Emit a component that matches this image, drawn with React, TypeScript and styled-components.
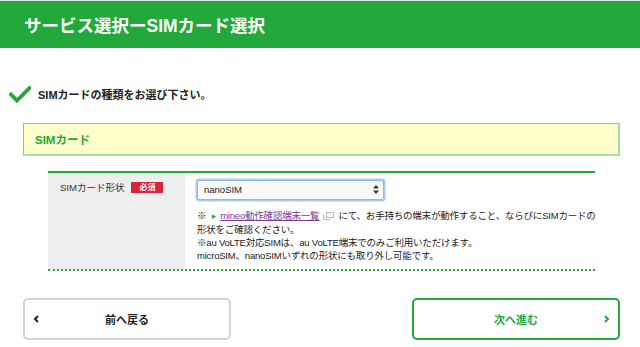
import React from 'react';
import styled, { createGlobalStyle } from 'styled-components';

const GlobalStyle = createGlobalStyle`
  html, body {
    margin: 0;
    padding: 0;
    background: #fff;
  }
  body {
    font-family: "Liberation Sans", "Noto Sans CJK JP", sans-serif;
    color: #222;
  }
`;

const Page = styled.div`
  width: 640px;
  height: 347px;
  overflow: hidden;
  border-top: 1px solid #e2e2e2;
  box-sizing: border-box;
`;

const Header = styled.header`
  height: 47px;
  background: #23a93b;
  display: flex;
  align-items: center;
  padding-left: 24px;
`;

const Title = styled.h1`
  margin: 0;
  font-size: 17.5px;
  font-weight: 700;
  color: #fff;
`;

const Lead = styled.div`
  display: flex;
  align-items: center;
  gap: 7px;
  margin: 37px 0 0 9px;
  height: 18px;
`;

const LeadText = styled.p`
  margin: 0;
  font-size: 11px;
  font-weight: 700;
  color: #222;
`;

const SectionBar = styled.div`
  margin: 20px 20px 0 23px;
  height: 30px;
  border: 1px solid #82cc86;
  border-right-width: 2px;
  border-bottom-width: 2px;
  border-bottom-color: #a7dba6;
  border-right-color: #a7dba6;
  background: #ffffcc;
  display: flex;
  align-items: center;
  padding-left: 11px;
  font-size: 11.5px;
  font-weight: 700;
  color: #23a93b;
`;

const Table = styled.div`
  margin: 15px 45px 0 48px;
  border-top: 2px solid #23a93b;
  border-bottom: 2px dotted #23a93b;
  display: grid;
  grid-template-columns: 137px 1fr;
  height: 96px;
`;

const LabelCell = styled.div`
  background: #eeeeee;
  display: flex;
  align-items: flex-start;
  gap: 7px;
  padding: 9px 0 0 12px;
  font-size: 9.5px;
  line-height: 12px;
  color: #333;
`;

const Required = styled.span`
  display: inline-block;
  background: #d9233b;
  color: #fff;
  font-size: 8px;
  font-weight: 700;
  padding: 0 8px;
  line-height: 11px;
`;

const ValueCell = styled.div`
  padding: 6px 0 0 12px;
`;

const SelectWrap = styled.div`
  position: relative;
  width: 187px;
  height: 20px;
`;

const Select = styled.select`
  appearance: none;
  width: 100%;
  height: 100%;
  box-sizing: border-box;
  border: 1px solid #8fb7ea;
  box-shadow: 0 0 0 1.5px #a9cdf5;
  border-radius: 2px;
  background: #fafafa;
  font-family: inherit;
  font-size: 9.5px;
  color: #222;
  padding: 0 0 0 6px;
  outline: none;
`;

const SelectArrows = styled.svg`
  position: absolute;
  right: 5px;
  top: 6px;
  pointer-events: none;
`;

const Notes = styled.div`
  margin-top: 10px;
  font-size: 9.5px;
  letter-spacing: -0.2px;
  line-height: 13px;
  color: #222;
`;

const NoteLine = styled.p`
  margin: 0;
  white-space: nowrap;
`;

const LinkMark = styled.span`
  color: #23a93b;
  font-size: 5px;
  margin: 0 4px 0 5px;
  vertical-align: 1px;
`;

const Link = styled.a`
  color: #7a3c9c;
  text-decoration: underline;
`;

const ExtIcon = styled.svg`
  margin: 0 4px 0 4px;
  vertical-align: -1px;
`;

const Buttons = styled.div`
  display: flex;
  justify-content: space-between;
  margin: 27px 20px 0 23px;
`;

const Button = styled.button<{ $primary?: boolean }>`
  position: relative;
  width: 208px;
  height: 42px;
  box-sizing: border-box;
  border: 2px solid ${p => (p.$primary ? '#23a93b' : '#d4d4d4')};
  border-radius: 5px;
  background: #fff;
  font-family: inherit;
  font-size: 11px;
  font-weight: 700;
  color: ${p => (p.$primary ? '#23a93b' : '#222')};
  display: flex;
  align-items: center;
  justify-content: center;
  cursor: pointer;
`;

const Chevron = styled.svg<{ $side: 'left' | 'right' }>`
  position: absolute;
  top: 50%;
  margin-top: -4px;
  ${p => (p.$side === 'left' ? 'left: 8px;' : 'right: 8px;')}
`;

const App: React.FC = () => {
  return (
    <>
      <GlobalStyle />
      <Page>
        <Header>
          <Title>サービス選択ーSIMカード選択</Title>
        </Header>

        <Lead>
          <svg width="22" height="17" viewBox="0 0 22 17">
            <path d="M2 8.5 L8 14.5 L20.5 2" fill="none" stroke="#23a93b" strokeWidth="3.8" strokeLinecap="square" />
          </svg>
          <LeadText>SIMカードの種類をお選び下さい。</LeadText>
        </Lead>

        <SectionBar>SIMカード</SectionBar>

        <Table>
          <LabelCell>
            SIMカード形状
            <Required>必須</Required>
          </LabelCell>
          <ValueCell>
            <SelectWrap>
              <Select defaultValue="nano">
                <option value="nano">nanoSIM</option>
                <option value="micro">microSIM</option>
              </Select>
              <SelectArrows width="6" height="9" viewBox="0 0 6 9">
                <path d="M3 0 L6 3.5 H0 Z M3 9 L6 5.5 H0 Z" fill="#333" />
              </SelectArrows>
            </SelectWrap>
            <Notes>
              <NoteLine>
                ※<LinkMark>▶</LinkMark>
                <Link href="#">mineo動作確認端末一覧</Link>
                <ExtIcon width="11" height="8" viewBox="0 0 11 8">
                  <rect x="3.5" y="0.5" width="7" height="5" fill="none" stroke="#bbb" />
                  <path d="M0.5 2.5 V7.5 H7.5" fill="none" stroke="#bbb" />
                </ExtIcon>
                にて、お手持ちの端末が動作すること、ならびにSIMカードの
              </NoteLine>
              <NoteLine>形状をご確認ください。</NoteLine>
              <NoteLine>※au VoLTE対応SIMは、au VoLTE端末でのみご利用いただけます。</NoteLine>
              <NoteLine>microSIM、nanoSIMいずれの形状にも取り外し可能です。</NoteLine>
            </Notes>
          </ValueCell>
        </Table>

        <Buttons>
          <Button>
            <Chevron $side="left" width="6" height="8" viewBox="0 0 6 8">
              <path d="M5 1 L2 4 L5 7" fill="none" stroke="#222" strokeWidth="2" />
            </Chevron>
            前へ戻る
          </Button>
          <Button $primary>
            次へ進む
            <Chevron $side="right" width="6" height="8" viewBox="0 0 6 8">
              <path d="M1 1 L4 4 L1 7" fill="none" stroke="#23a93b" strokeWidth="2" />
            </Chevron>
          </Button>
        </Buttons>
      </Page>
    </>
  );
};

export default App;
